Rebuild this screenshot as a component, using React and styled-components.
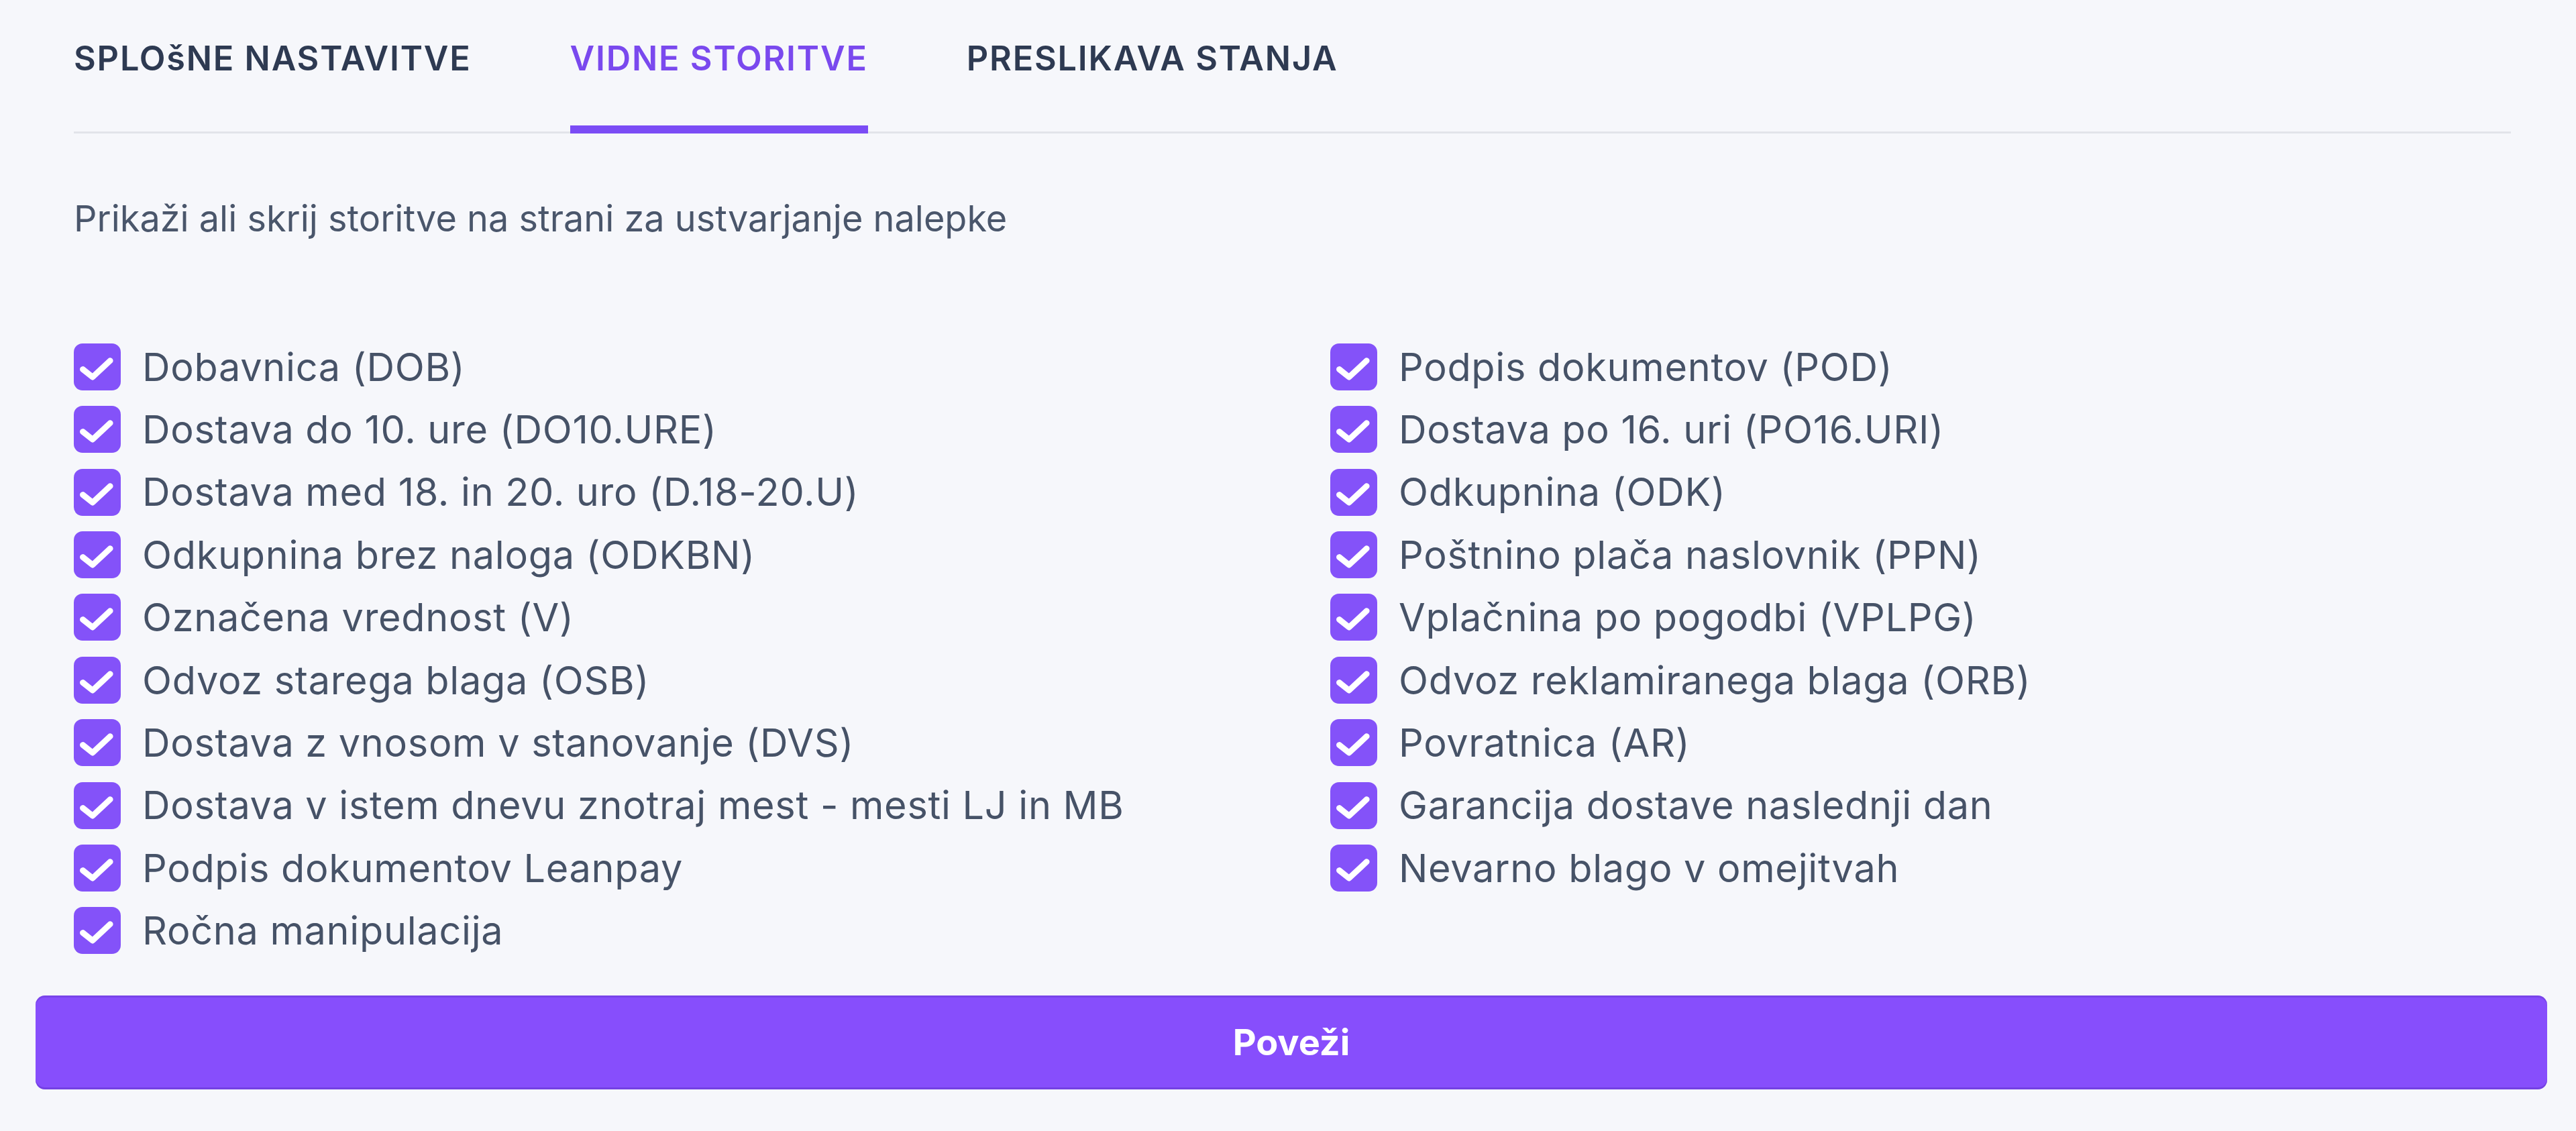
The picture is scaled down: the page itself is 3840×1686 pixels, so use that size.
import React, { useState } from "react";
import styled, { createGlobalStyle } from "styled-components";

const Global = createGlobalStyle`
  html, body { margin: 0; padding: 0; background: #f6f7fb; }
  body { font-family: Inter, "Noto Sans", sans-serif; -webkit-font-smoothing: antialiased; }
  * { box-sizing: border-box; }
`;

const Page = styled.div`
  padding: 0 43px 0 53px;
  background: #f6f7fb;
  min-height: 1686px;
`;

const Section = styled.div`
  padding: 0 54px 0 57px;
`;

const TabBar = styled.div`
  display: flex;
  gap: 147px;
  border-bottom: 3px solid #e2e4ea;
`;

const Tab = styled.button`
  appearance: none;
  background: none;
  border: none;
  border-bottom: 12px solid ${(p) => (p.$active ? "#7b4cf5" : "transparent")};
  margin-bottom: -3px;
  padding: 49px 0 62px;
  font-family: Inter, sans-serif;
  font-size: 50.4px;
  line-height: 75.6px;
  font-weight: 600;
  letter-spacing: 1.8px;
  color: ${(p) => (p.$active ? "#7a49ee" : "#2e3a52")};
  cursor: pointer;
`;

const Description = styled.p`
  margin: 86px 0 0;
  font-size: 54px;
  line-height: 81px;
  color: #4a566b;
  font-weight: 400;
`;

const Grid = styled.div`
  margin-top: 138px;
  display: grid;
  grid-template-columns: 1760px 1fr;
  grid-auto-flow: column;
  grid-template-rows: repeat(10, 86.4px);
  column-gap: 113px;
  row-gap: 7px;
`;

const Item = styled.label`
  display: flex;
  align-items: center;
  gap: 32px;
  font-size: 57.6px;
  line-height: 86.4px;
  letter-spacing: 0.7px;
  color: #465267;
  cursor: pointer;
  white-space: nowrap;
`;

const Box = styled.span`
  flex: none;
  width: 70px;
  height: 70px;
  border-radius: 13px;
  background: ${(p) => (p.$checked ? "#8452f9" : "#fff")};
  border: ${(p) => (p.$checked ? "none" : "3px solid #cbd0da")};
  display: flex;
  align-items: center;
  justify-content: center;
`;

const Button = styled.button`
  display: block;
  width: 100%;
  margin-top: 53px;
  height: 140px;
  border: none;
  border-radius: 14px;
  background: #874efc;
  box-shadow: inset 0 -3px 0 rgba(80, 40, 180, 0.35), inset 0 3px 0 rgba(80, 40, 180, 0.25);
  color: #fff;
  font-family: Inter, sans-serif;
  font-size: 54px;
  font-weight: 700;
  cursor: pointer;
`;

const left = [
  "Dobavnica (DOB)",
  "Dostava do 10. ure (DO10.URE)",
  "Dostava med 18. in 20. uro (D.18-20.U)",
  "Odkupnina brez naloga (ODKBN)",
  "Označena vrednost (V)",
  "Odvoz starega blaga (OSB)",
  "Dostava z vnosom v stanovanje (DVS)",
  "Dostava v istem dnevu znotraj mest - mesti LJ in MB",
  "Podpis dokumentov Leanpay",
  "Ročna manipulacija",
];
const right = [
  "Podpis dokumentov (POD)",
  "Dostava po 16. uri (PO16.URI)",
  "Odkupnina (ODK)",
  "Poštnino plača naslovnik (PPN)",
  "Vplačnina po pogodbi (VPLPG)",
  "Odvoz reklamiranega blaga (ORB)",
  "Povratnica (AR)",
  "Garancija dostave naslednji dan",
  "Nevarno blago v omejitvah",
];

const Check = () => (
  <svg width="70" height="70" viewBox="0 0 24 24" fill="none">
    <path d="M4.6 13.2 9.6 17.2 18.6 8.8" stroke="#fff" strokeWidth="3" strokeLinecap="round" strokeLinejoin="round" />
  </svg>
);

export default function App() {
  const [tab, setTab] = useState(1);
  const all = [...left, ...right];
  const [checked, setChecked] = useState(() => all.map(() => true));
  const tabs = ["SPLOšNE NASTAVITVE", "VIDNE STORITVE", "PRESLIKAVA STANJA"];
  return (
    <>
      <Global />
      <Page>
        <Section>
          <TabBar>
            {tabs.map((t, i) => (
              <Tab key={t} $active={i === tab} onClick={() => setTab(i)}>
                {t}
              </Tab>
            ))}
          </TabBar>
          <Description>Prikaži ali skrij storitve na strani za ustvarjanje nalepke</Description>
          <Grid>
            {all.map((label, i) => (
              <Item
                key={label}
                onClick={() => setChecked((c) => c.map((v, j) => (j === i ? !v : v)))}
              >
                <Box $checked={checked[i]}>{checked[i] && <Check />}</Box>
                {label}
              </Item>
            ))}
          </Grid>
        </Section>
        <Button>Poveži</Button>
      </Page>
    </>
  );
}
